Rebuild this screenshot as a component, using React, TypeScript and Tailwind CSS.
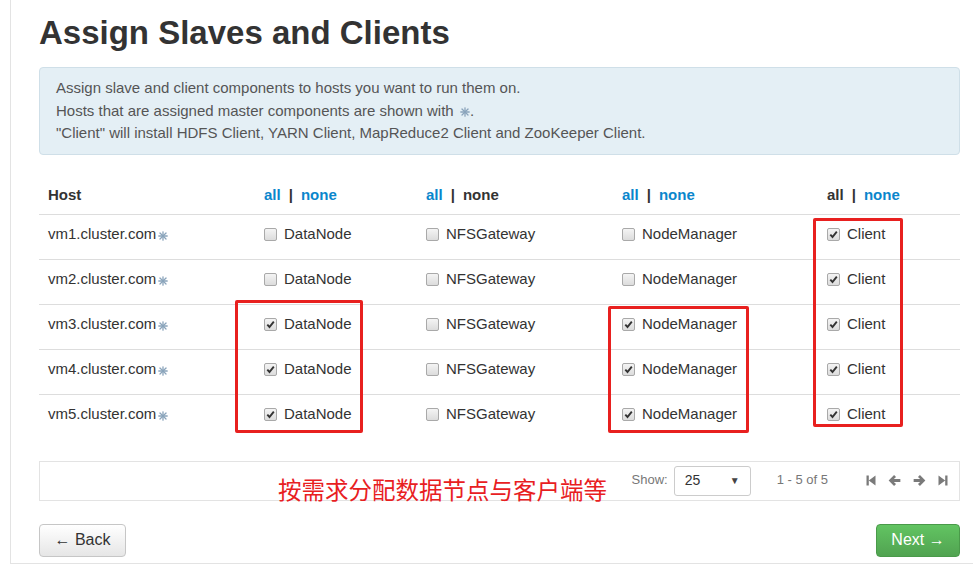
import React from 'react'

const font = { fontFamily: '"Liberation Sans", Arial, "Noto Sans CJK SC", sans-serif' }

interface Host {
  name: string
  dataNode: boolean
  nfs: boolean
  nodeManager: boolean
  client: boolean
}

const hosts: Host[] = [
  { name: 'vm1.cluster.com', dataNode: false, nfs: false, nodeManager: false, client: true },
  { name: 'vm2.cluster.com', dataNode: false, nfs: false, nodeManager: false, client: true },
  { name: 'vm3.cluster.com', dataNode: true, nfs: false, nodeManager: true, client: true },
  { name: 'vm4.cluster.com', dataNode: true, nfs: false, nodeManager: true, client: true },
  { name: 'vm5.cluster.com', dataNode: true, nfs: false, nodeManager: true, client: true },
]

function MasterStar() {
  return (
    <svg width="10" height="10" viewBox="0 0 10 10" className="inline-block ml-[2px] -mb-[1px]">
      <g stroke="#8aa4bb" strokeWidth="1.3" strokeLinecap="round">
        <line x1="5" y1="0.8" x2="5" y2="9.2" />
        <line x1="0.8" y1="5" x2="9.2" y2="5" />
        <line x1="2" y1="2" x2="8" y2="8" />
        <line x1="8" y1="2" x2="2" y2="8" />
      </g>
      <circle cx="5" cy="5" r="1.2" fill="#8aa4bb" />
    </svg>
  )
}

function Check({ on, label }: { on: boolean; label: string }) {
  return (
    <span className="inline-flex items-center gap-[7px]">
      <span className="w-[13px] h-[13px] rounded-[2px] border border-[#a9a9a9] bg-gradient-to-b from-[#f4f4f4] to-[#dcdcdc] flex items-center justify-center">
        {on && (
          <svg width="9" height="9" viewBox="0 0 9 9">
            <path d="M1.3 4.6 L3.5 7 L7.8 1.6" fill="none" stroke="#333" strokeWidth="1.9" />
          </svg>
        )}
      </span>
      <span>{label}</span>
    </span>
  )
}

function AllNone({ allActive, noneActive }: { allActive: boolean; noneActive: boolean }) {
  return (
    <span className="font-bold">
      <span className={allActive ? 'text-[#0a86cc]' : 'text-[#333]'}>all</span>
      <span className="text-[#333] mx-[8px]">|</span>
      <span className={noneActive ? 'text-[#0a86cc]' : 'text-[#333]'}>none</span>
    </span>
  )
}

function PagerIcon({ kind }: { kind: 'first' | 'prev' | 'next' | 'last' }) {
  if (kind === 'first' || kind === 'last') {
    return (
      <svg width="10" height="13" viewBox="0 0 10 13" fill="#7a7a7a">
        {kind === 'first' ? (
          <path d="M0.5 1.5h2.3v10H0.5z M2.8 6.5 L9.5 1.5v10z" />
        ) : (
          <path d="M7.2 1.5h2.3v10H7.2z M7.2 6.5 L0.5 1.5v10z" />
        )}
      </svg>
    )
  }
  return (
    <svg width="13" height="13" viewBox="0 0 12 12" fill="#7a7a7a">
      {kind === 'prev' && <path d="M0.6 6 L5.6 1 L7.4 2.8 L5.4 4.7 H11.4 V7.3 H5.4 L7.4 9.2 L5.6 11z" />}
      {kind === 'next' && <path d="M11.4 6 L6.4 1 L4.6 2.8 L6.6 4.7 H0.6 V7.3 H6.6 L4.6 9.2 L6.4 11z" />}
    </svg>
  )
}

export default function App() {
  return (
    <div className="w-[973px] h-[564px] bg-white overflow-hidden relative text-[#333]" style={font}>
      <div className="ml-[10px] h-[564px] border-l border-b border-[#e3e3e3] pl-[28px] pr-[13px]">
        <h1 className="text-[33px] font-bold leading-[36px] pt-[15px] text-[#333]">
          Assign Slaves and Clients
        </h1>

        <div className="mt-[16px] rounded-[4px] border border-[#cfdfe8] bg-[#e4eff5] pl-[16px] pt-[9px] pb-[9px] text-[15px] leading-[22.5px] text-[#555]">
          <div>Assign slave and client components to hosts you want to run them on.</div>
          <div>
            Hosts that are assigned master components are shown with <MasterStar />.
          </div>
          <div>"Client" will install HDFS Client, YARN Client, MapReduce2 Client and ZooKeeper Client.</div>
        </div>

        <table className="mt-[21px] w-full text-[15px] border-collapse">
          <colgroup>
            <col className="w-[217px]" />
            <col className="w-[162px]" />
            <col className="w-[196px]" />
            <col className="w-[205px]" />
            <col />
          </colgroup>
          <thead>
            <tr className="h-[39px] border-b border-[#dddddd] text-left">
              <th className="px-[9px] font-bold">Host</th>
              <th className="px-[8px]"><AllNone allActive noneActive /></th>
              <th className="px-[8px]"><AllNone allActive noneActive={false} /></th>
              <th className="px-[8px]"><AllNone allActive noneActive /></th>
              <th className="px-[8px]"><AllNone allActive={false} noneActive /></th>
            </tr>
          </thead>
          <tbody>
            {hosts.map((h, i) => (
              <tr key={h.name} className={`h-[45px] ${i < hosts.length - 1 ? 'border-b border-[#dddddd]' : ''}`}>
                <td className="px-[9px] align-top pt-[8px]">
                  {h.name}
                  <MasterStar />
                </td>
                <td className="px-[8px] align-top pt-[8px]"><Check on={h.dataNode} label="DataNode" /></td>
                <td className="px-[8px] align-top pt-[8px]"><Check on={h.nfs} label="NFSGateway" /></td>
                <td className="px-[8px] align-top pt-[8px]"><Check on={h.nodeManager} label="NodeManager" /></td>
                <td className="px-[8px] align-top pt-[8px]"><Check on={h.client} label="Client" /></td>
              </tr>
            ))}
          </tbody>
        </table>

        <div className="mt-[21px] h-[40px] border border-[#e3e3e3] flex items-center justify-end pr-[11px] text-[13px]">
          <span className="text-[#777] mr-[6px] -mt-[1px]">Show:</span>
          <span className="w-[77px] h-[30px] border border-[#cccccc] rounded-[3px] flex items-center justify-between px-[10px] text-[#333] text-[14px]">
            <span>25</span>
            <span className="text-[10px] text-[#444]">▼</span>
          </span>
          <span className="ml-[26px] text-[#777] text-[13px] -mt-[1px]">1 - 5 of 5</span>
          <span className="ml-[38px] flex items-center gap-[12px] -mt-[1px]">
            <PagerIcon kind="first" />
            <PagerIcon kind="prev" />
            <PagerIcon kind="next" />
            <PagerIcon kind="last" />
          </span>
        </div>

        <div className="mt-[23px] flex justify-between">
          <button className="h-[33px] w-[87px] rounded-[4px] border border-[#c6c6c6] bg-gradient-to-b from-white to-[#e6e6e6] text-[16px] text-[#333]">
            ← Back
          </button>
          <button className="h-[33px] w-[84px] rounded-[4px] border border-[#4a9a4a] bg-gradient-to-b from-[#62c462] to-[#51a351] text-[16px] text-white">
            Next →
          </button>
        </div>
      </div>

      {/* annotations */}
      <div className="absolute left-[278px] top-[477px] text-[23.5px] leading-[28px] text-[#e8201f]" style={font}>
        按需求分配数据节点与客户端等
      </div>
      <div className="absolute left-[235px] top-[300px] w-[128px] h-[133px] border-[3px] border-[#e8201f] rounded-[2px]" />
      <div className="absolute left-[608px] top-[306px] w-[141px] h-[127px] border-[3px] border-[#e8201f] rounded-[2px]" />
      <div className="absolute left-[813px] top-[218px] w-[90px] h-[209px] border-[3px] border-[#e8201f] rounded-[2px]" />
    </div>
  )
}
